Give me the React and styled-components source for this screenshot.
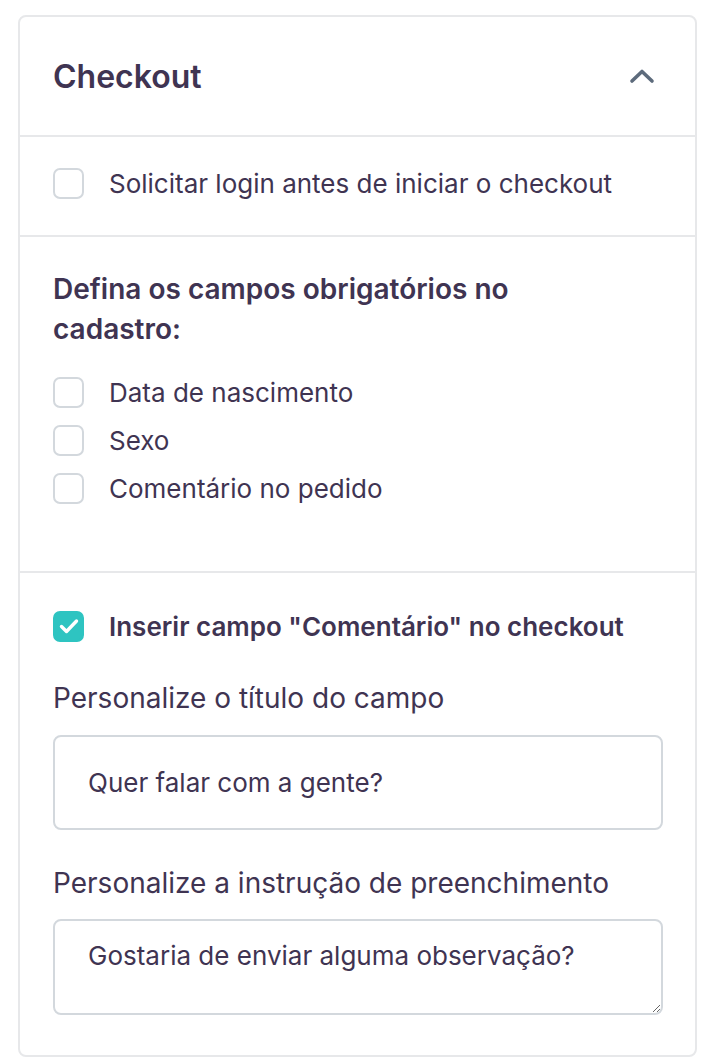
import React, { useState } from "react";
import styled, { createGlobalStyle } from "styled-components";

const GlobalStyle = createGlobalStyle`
  * { box-sizing: border-box; }
  body {
    margin: 0;
    background: #ffffff;
    font-family: Inter, "Noto Sans", sans-serif;
    color: #3f3452;
  }
`;

const Page = styled.div`
  padding: 15px 21px 9px 18px;
`;

const Card = styled.div`
  border: 2px solid #e7e8ea;
  border-radius: 8px;
  background: #fff;
`;

const Header = styled.div`
  height: 120px;
  display: flex;
  align-items: center;
  justify-content: space-between;
  padding: 0 40px 0 33px;
  border-bottom: 2px solid #e7e8ea;
`;

const Title = styled.h2`
  margin: 0;
  font-size: 32px;
  font-weight: 600;
  color: #3f3452;
`;

const Section = styled.div`
  padding: ${(p) => p.$pad};
  border-bottom: ${(p) => (p.$last ? "none" : "2px solid #e7e8ea")};
  padding-left: 33px;
  padding-right: 32px;
`;

const Row = styled.label`
  display: flex;
  align-items: center;
  height: ${(p) => p.$h || 48}px;
  gap: 25px;
  font-size: 26px;
  font-weight: ${(p) => (p.$bold ? 600 : 400)};
  cursor: pointer;
`;

const Box = styled.span`
  width: 31px;
  height: 31px;
  flex: none;
  border-radius: 7px;
  border: 2px solid ${(p) => (p.$on ? "#2ec4c1" : "#d3d8dd")};
  background: ${(p) => (p.$on ? "#2ec4c1" : "#fff")};
  display: flex;
  align-items: center;
  justify-content: center;
`;

const Heading = styled.div`
  font-size: 28px;
  font-weight: 600;
  line-height: 40px;
  margin-bottom: 19px;
  max-width: 490px;
`;

const FieldLabel = styled.div`
  font-size: 28px;
  line-height: 36px;
  margin-top: ${(p) => p.$mt}px;
  margin-bottom: ${(p) => p.$mb}px;
`;

const Input = styled.input`
  display: block;
  width: 100%;
  height: 95px;
  border: 2px solid #d3d8dd;
  border-radius: 8px;
  padding: 0 33px;
  font-family: Inter, "Noto Sans", sans-serif;
  font-size: 26px;
  color: #3f3452;
  outline: none;
`;

const TextArea = styled.textarea`
  display: block;
  width: 100%;
  height: 96px;
  border: 2px solid #d3d8dd;
  border-radius: 8px;
  padding: 18px 33px;
  font-family: Inter, "Noto Sans", sans-serif;
  font-size: 26px;
  line-height: 34px;
  color: #3f3452;
  resize: vertical;
  outline: none;
`;

function Check({ on, label, bold, h, onToggle }) {
  return (
    <Row $bold={bold} $h={h} onClick={onToggle}>
      <Box $on={on}>
        {on && (
          <svg width="24" height="24" viewBox="0 0 24 24" fill="none">
            <path d="M4.5 12.5l5 5L19.5 7" stroke="#fff" strokeWidth="3.4" strokeLinecap="round" strokeLinejoin="round" />
          </svg>
        )}
      </Box>
      {label}
    </Row>
  );
}

export default function App() {
  const [checks, setChecks] = useState({
    login: false,
    nasc: false,
    sexo: false,
    coment: false,
    campo: true,
  });
  const toggle = (k) => setChecks((c) => ({ ...c, [k]: !c[k] }));

  return (
    <>
      <GlobalStyle />
      <Page>
        <Card>
          <Header>
            <Title>Checkout</Title>
            <svg width="26" height="16" viewBox="0 0 26 16" fill="none">
              <path d="M3 13L13 3.5 23 13" stroke="#5d6b7c" strokeWidth="3.6" strokeLinecap="round" strokeLinejoin="round" />
            </svg>
          </Header>
          <Section $pad="28px 0 34px">
            <Check h={36} on={checks.login} onToggle={() => toggle("login")} label="Solicitar login antes de iniciar o checkout" />
          </Section>
          <Section $pad="32px 0 59px">
            <Heading>Defina os campos obrigatórios no cadastro:</Heading>
            <Check on={checks.nasc} onToggle={() => toggle("nasc")} label="Data de nascimento" />
            <Check on={checks.sexo} onToggle={() => toggle("sexo")} label="Sexo" />
            <Check on={checks.coment} onToggle={() => toggle("coment")} label="Comentário no pedido" />
          </Section>
          <Section $pad="35px 0 40px" $last>
            <Check h={36} bold on={checks.campo} onToggle={() => toggle("campo")} label='Inserir campo "Comentário" no checkout' />
            <FieldLabel $mt={36} $mb={19}>Personalize o título do campo</FieldLabel>
            <Input defaultValue="Quer falar com a gente?" />
            <FieldLabel $mt={35} $mb={18}>Personalize a instrução de preenchimento</FieldLabel>
            <TextArea defaultValue="Gostaria de enviar alguma observação?" />
          </Section>
        </Card>
      </Page>
    </>
  );
}
